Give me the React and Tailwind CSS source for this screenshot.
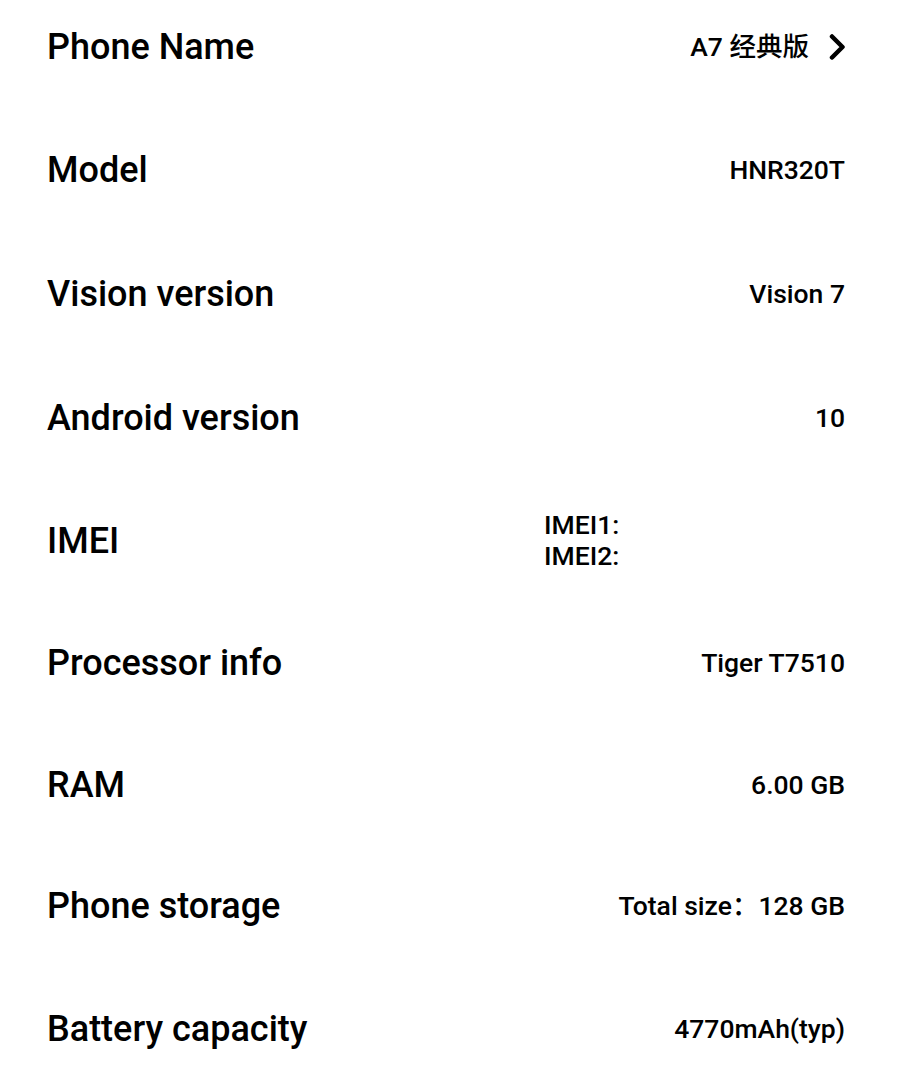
const rows = [
    { label: 'Phone Name', value: 'A7 经典版', link: true, space: 'mt-[25.5px]' },
    { label: 'Model', value: 'HNR320T', space: 'mt-[81.5px]' },
    { label: 'Vision version', value: 'Vision 7', space: 'mt-[81.5px]' },
    { label: 'Android version', value: '10', space: 'mt-[82.5px]' },
    { label: 'IMEI', lines: ['IMEI1:', 'IMEI2:'], space: 'mt-[80.5px]' },
    { label: 'Processor info', value: 'Tiger T7510', space: 'mt-[80px]' },
    { label: 'RAM', value: '6.00 GB', space: 'mt-[80px]' },
    { label: 'Phone storage', value: 'Total size：128 GB', space: 'mt-[79.5px]' },
    { label: 'Battery capacity', value: '4770mAh(typ)', space: 'mt-[80.5px]' },
];

function Chevron() {
    return (
        <svg width="17" height="28" viewBox="0 0 17 28" fill="none" className="shrink-0">
            <path d="M4 3.5 L14.5 14 L4 24.5" stroke="#000" strokeWidth="4.5" strokeLinecap="round" strokeLinejoin="round" />
        </svg>
    );
}

export default function App() {
    return (
        <div className="min-h-[1084px] bg-white text-black font-['Roboto','Noto_Sans_CJK_SC',sans-serif] font-medium">
            <div className="flex flex-col pl-[47px] pr-[55px]">
                {rows.map((r) => (
                    <div key={r.label} className={`${r.space} flex h-[42px] items-center justify-between`}>
                        <p className="text-[36px] leading-[42px]">{r.label}</p>
                        {r.lines ? (
                            <div className="w-[301px] text-[26.5px] leading-[30.7px]">
                                {r.lines.map((l) => <p key={l}>{l}</p>)}
                            </div>
                        ) : (
                            <div className="flex items-center gap-[19px]">
                                <p className="text-[26.5px] leading-[32px]">{r.value}</p>
                                {r.link && <Chevron />}
                            </div>
                        )}
                    </div>
                ))}
            </div>
        </div>
    );
}
